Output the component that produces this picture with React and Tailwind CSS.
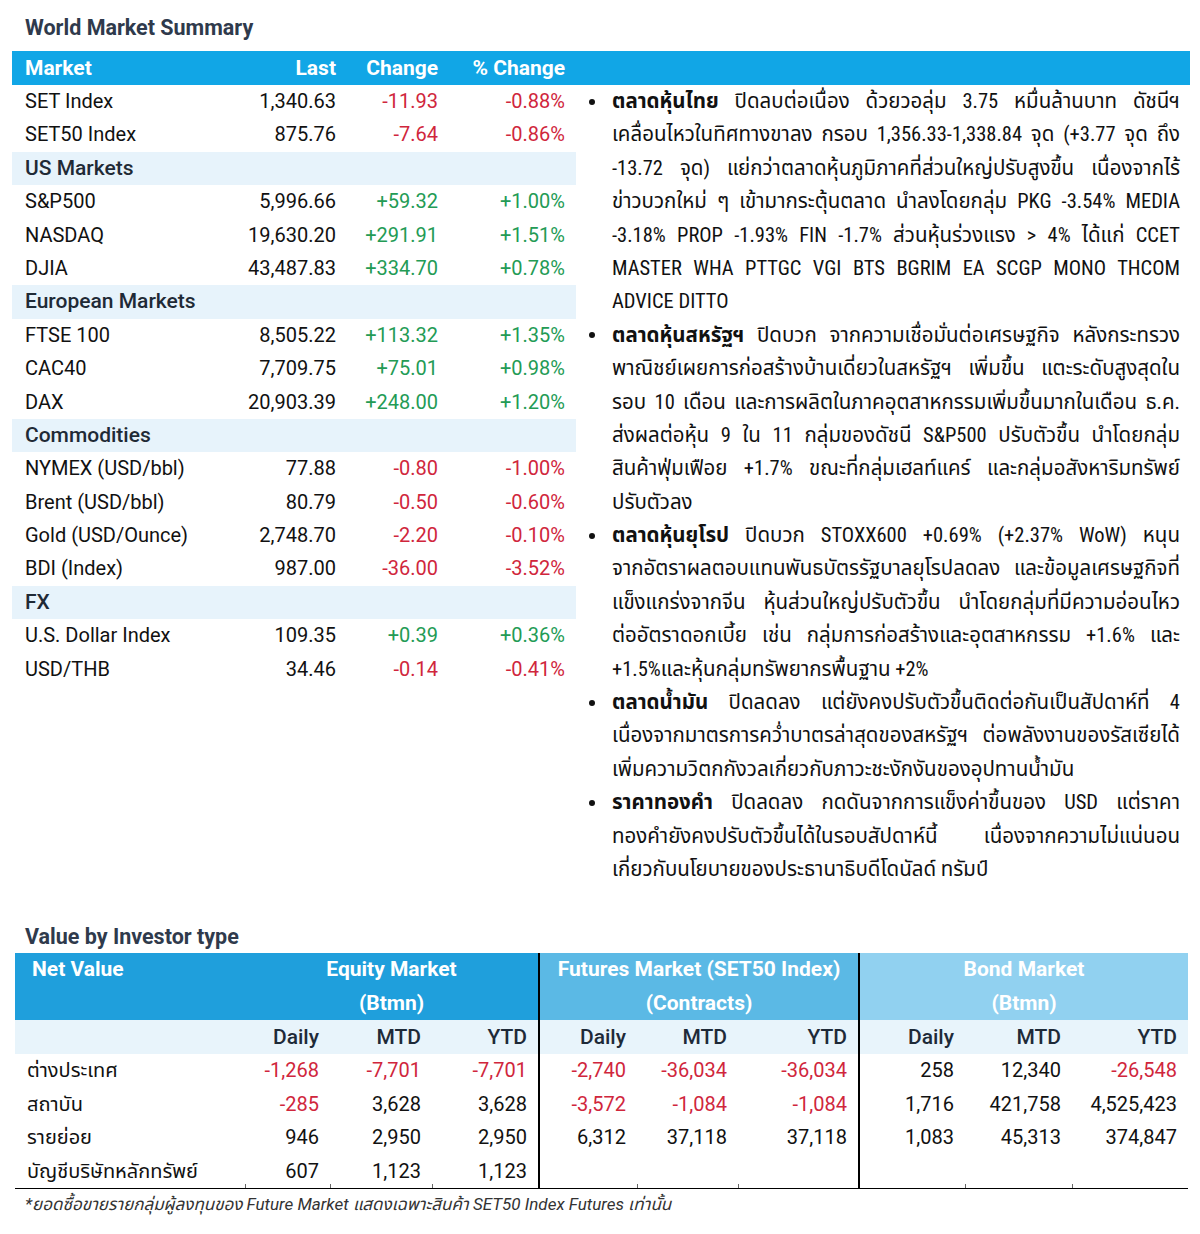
import React from 'react';

const font = { fontFamily: 'Roboto, "Noto Sans Thai", "Noto Sans", sans-serif' };
const narrow = { fontFamily: '"Roboto Condensed", Roboto, "Noto Sans Thai", "Noto Sans", sans-serif' };

const RED = 'text-[#d0263c]';
const GREEN = 'text-[#239b55]';

const marketRows = [
  { name: 'SET Index', last: '1,340.63', chg: '-11.93', pct: '-0.88%' },
  { name: 'SET50 Index', last: '875.76', chg: '-7.64', pct: '-0.86%' },
  { section: 'US Markets' },
  { name: 'S&P500', last: '5,996.66', chg: '+59.32', pct: '+1.00%' },
  { name: 'NASDAQ', last: '19,630.20', chg: '+291.91', pct: '+1.51%' },
  { name: 'DJIA', last: '43,487.83', chg: '+334.70', pct: '+0.78%' },
  { section: 'European Markets' },
  { name: 'FTSE 100', last: '8,505.22', chg: '+113.32', pct: '+1.35%' },
  { name: 'CAC40', last: '7,709.75', chg: '+75.01', pct: '+0.98%' },
  { name: 'DAX', last: '20,903.39', chg: '+248.00', pct: '+1.20%' },
  { section: 'Commodities' },
  { name: 'NYMEX (USD/bbl)', last: '77.88', chg: '-0.80', pct: '-1.00%' },
  { name: 'Brent (USD/bbl)', last: '80.79', chg: '-0.50', pct: '-0.60%' },
  { name: 'Gold (USD/Ounce)', last: '2,748.70', chg: '-2.20', pct: '-0.10%' },
  { name: 'BDI (Index)', last: '987.00', chg: '-36.00', pct: '-3.52%' },
  { section: 'FX' },
  { name: 'U.S. Dollar Index', last: '109.35', chg: '+0.39', pct: '+0.36%' },
  { name: 'USD/THB', last: '34.46', chg: '-0.14', pct: '-0.41%' },
];

// each paragraph: bold lead + lines (first line follows the lead)
const news = [
  {
    lead: 'ตลาดหุ้นไทย',
    lines: [
      ' ปิดลบต่อเนื่อง ด้วยวอลุ่ม 3.75 หมื่นล้านบาท ดัชนีฯ',
      'เคลื่อนไหวในทิศทางขาลง กรอบ 1,356.33-1,338.84 จุด (+3.77 จุด ถึง',
      '-13.72 จุด) แย่กว่าตลาดหุ้นภูมิภาคที่ส่วนใหญ่ปรับสูงขึ้น เนื่องจากไร้',
      'ข่าวบวกใหม่ ๆ เข้ามากระตุ้นตลาด นำลงโดยกลุ่ม PKG -3.54% MEDIA',
      '-3.18% PROP -1.93% FIN -1.7%  ส่วนหุ้นร่วงแรง > 4% ได้แก่ CCET',
      'MASTER WHA PTTGC VGI BTS BGRIM EA SCGP MONO THCOM',
      'ADVICE DITTO',
    ],
  },
  {
    lead: 'ตลาดหุ้นสหรัฐฯ',
    lines: [
      ' ปิดบวก จากความเชื่อมั่นต่อเศรษฐกิจ หลังกระทรวง',
      'พาณิชย์เผยการก่อสร้างบ้านเดี่ยวในสหรัฐฯ เพิ่มขึ้น แตะระดับสูงสุดใน',
      'รอบ 10 เดือน และการผลิตในภาคอุตสาหกรรมเพิ่มขึ้นมากในเดือน ธ.ค.',
      'ส่งผลต่อหุ้น 9 ใน 11 กลุ่มของดัชนี S&P500 ปรับตัวขึ้น นำโดยกลุ่ม',
      'สินค้าฟุ่มเฟือย +1.7% ขณะที่กลุ่มเฮลท์แคร์ และกลุ่มอสังหาริมทรัพย์',
      'ปรับตัวลง',
    ],
  },
  {
    lead: 'ตลาดหุ้นยุโรป',
    lines: [
      ' ปิดบวก STOXX600 +0.69% (+2.37% WoW) หนุน',
      'จากอัตราผลตอบแทนพันธบัตรรัฐบาลยุโรปลดลง และข้อมูลเศรษฐกิจที่',
      'แข็งแกร่งจากจีน หุ้นส่วนใหญ่ปรับตัวขึ้น นำโดยกลุ่มที่มีความอ่อนไหว',
      'ต่ออัตราดอกเบี้ย เช่น กลุ่มการก่อสร้างและอุตสาหกรรม +1.6% และ',
      '+1.5%และหุ้นกลุ่มทรัพยากรพื้นฐาน +2%',
    ],
  },
  {
    lead: 'ตลาดน้ำมัน',
    lines: [
      ' ปิดลดลง แต่ยังคงปรับตัวขึ้นติดต่อกันเป็นสัปดาห์ที่ 4',
      'เนื่องจากมาตรการคว่ำบาตรล่าสุดของสหรัฐฯ ต่อพลังงานของรัสเซียได้',
      'เพิ่มความวิตกกังวลเกี่ยวกับภาวะชะงักงันของอุปทานน้ำมัน',
    ],
  },
  {
    lead: 'ราคาทองคำ',
    lines: [
      ' ปิดลดลง กดดันจากการแข็งค่าขึ้นของ USD แต่ราคา',
      'ทองคำยังคงปรับตัวขึ้นได้ในรอบสัปดาห์นี้ เนื่องจากความไม่แน่นอน',
      'เกี่ยวกับนโยบายของประธานาธิบดีโดนัลด์ ทรัมป์',
    ],
  },
];

const investors = [
  { name: 'ต่างประเทศ', v: ['-1,268', '-7,701', '-7,701', '-2,740', '-36,034', '-36,034', '258', '12,340', '-26,548'] },
  { name: 'สถาบัน', v: ['-285', '3,628', '3,628', '-3,572', '-1,084', '-1,084', '1,716', '421,758', '4,525,423'] },
  { name: 'รายย่อย', v: ['946', '2,950', '2,950', '6,312', '37,118', '37,118', '1,083', '45,313', '374,847'] },
  { name: 'บัญชีบริษัทหลักทรัพย์', v: ['607', '1,123', '1,123', '', '', '', '', '', ''] },
];

const tone = (s) => (s.startsWith('-') ? RED : s.startsWith('+') ? GREEN : 'text-[#111]');

const GRID = 'grid grid-cols-[211px_100px_102px_127px] pl-[13px]';
const BGRID = 'grid grid-cols-[230px_85px_102px_106px_99px_101px_120px_107px_107px_116px]';

const App = () => {
  return (
    <div className="w-[1200px] h-[1234px] bg-white text-[#111]" style={font}>
      {/* World Market Summary */}
      <div className="h-[51px] pt-[15px] pl-[25px] text-[21.5px] leading-[26px] font-bold text-[#2f3a4c]">
        World Market Summary
      </div>

      <div className="ml-[12px] mr-[10px] h-[34px] bg-[#11a6e6] text-white font-bold text-[21px] leading-[34px]">
        <div className={`${GRID} w-[564px]`}>
          <div>Market</div>
          <div className="text-right">Last</div>
          <div className="text-right">Change</div>
          <div className="text-right">% Change</div>
        </div>
      </div>

      <div className="flex h-[801px]">
        {/* market table */}
        <div className="ml-[12px] w-[564px] text-[20px]">
          {marketRows.map((r, i) =>
            r.section ? (
              <div key={i} className="h-[33.4px] leading-[33.4px] bg-[#e7f3fb] pl-[13px] text-[21px] font-medium text-[#1f2a36]">
                {r.section}
              </div>
            ) : (
              <div key={i} className={`${GRID} h-[33.4px] leading-[33.4px]`}>
                <div className="whitespace-nowrap">{r.name}</div>
                <div className="text-right">{r.last}</div>
                <div className={`text-right ${tone(r.chg)}`}>{r.chg}</div>
                <div className={`text-right ${tone(r.pct)}`}>{r.pct}</div>
              </div>
            )
          )}
        </div>

        {/* news bullets */}
        <div className="ml-[13px] w-[591px] text-[20.5px] text-[#111]" style={narrow}>
          {news.map((p, i) => (
            <div key={i} className="flex">
              <div className="w-[23px] h-[33.4px] flex items-center">
                <span className="w-[6px] h-[6px] rounded-full bg-[#111]"></span>
              </div>
              <div className="w-[568px]">
                {p.lines.map((l, j) => {
                  const last = j === p.lines.length - 1;
                  return (
                    <div
                      key={j}
                      className={`h-[33.4px] leading-[33.4px] whitespace-nowrap ${last ? 'text-left' : 'text-justify [text-align-last:justify]'}`}
                    >
                      {j === 0 && <b>{p.lead}</b>}
                      {l}
                    </div>
                  );
                })}
              </div>
            </div>
          ))}
        </div>
      </div>

      {/* Value by Investor type */}
      <div className="h-[67px] pt-[38px] pl-[25px] text-[21.5px] leading-[26px] font-bold text-[#2f3a4c]">
        Value by Investor type
      </div>

      <div className="ml-[15px] w-[1173px] text-[20px]">
        {/* header row 1 */}
        <div className={`${BGRID} h-[67px] text-white font-bold text-[21px] leading-[33.5px]`}>
          <div className="bg-[#1f9fdc] pl-[17px]">Net Value</div>
          <div className="col-span-3 bg-[#1f9fdc] text-center">
            <div>Equity Market</div>
            <div>(Btmn)</div>
          </div>
          <div className="col-span-3 bg-[#5bb9e5] text-center border-l-2 border-black">
            <div>Futures Market (SET50 Index)</div>
            <div>(Contracts)</div>
          </div>
          <div className="col-span-3 bg-[#91d1f0] text-center border-l-2 border-black">
            <div>Bond Market</div>
            <div>(Btmn)</div>
          </div>
        </div>

        {/* header row 2 */}
        <div className={`${BGRID} h-[34px] leading-[34px] bg-[#e8f4fb] text-[#1e2a38] text-[21px] font-medium`}>
          <div></div>
          {['Daily', 'MTD', 'YTD', 'Daily', 'MTD', 'YTD', 'Daily', 'MTD', 'YTD'].map((h, k) => (
            <div
              key={k}
              className={`text-right pr-[11px] ${k === 3 || k === 6 ? 'border-l-2 border-black' : ''}`}
            >
              {h}
            </div>
          ))}
        </div>

        {/* data rows */}
        <div className="border-b border-black">
          {investors.map((r, i) => (
            <div key={i} className={`${BGRID} h-[33.5px] leading-[33.5px]`}>
              <div className="pl-[12px] whitespace-nowrap">{r.name}</div>
              {r.v.map((v, k) => (
                <div
                  key={k}
                  className={`relative text-right pr-[11px] ${tone(v)} ${k === 3 || k === 6 ? 'border-l-2 border-black' : ''}`}
                >
                  {v}
                  {i === investors.length - 1 && k !== 3 && k !== 6 && (
                    <span className="absolute left-0 bottom-0 w-px h-[4px] bg-[#666]"></span>
                  )}
                </div>
              ))}
            </div>
          ))}
        </div>

        <div className="mt-[5px] pl-[10px] text-[17px] leading-[20px] italic text-[#333]">
          *ยอดซื้อขายรายกลุ่มผู้ลงทุนของ Future Market แสดงเฉพาะสินค้า SET50 Index Futures เท่านั้น
        </div>
      </div>
    </div>
  );
};

export default App;
